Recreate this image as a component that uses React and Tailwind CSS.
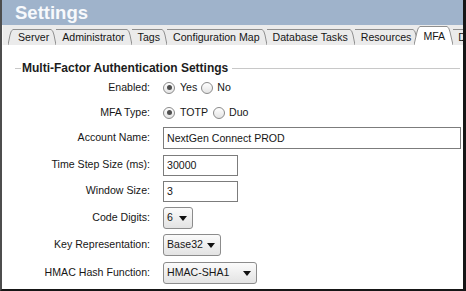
import React from 'react';

const TABS = ['Server', 'Administrator', 'Tags', 'Configuration Map', 'Database Tasks', 'Resources'];

function SlantRight() {
  return (
    <svg width="5" height="16" viewBox="0 0 5 16" className="block shrink-0">
      <path d="M0 0.5 Q2 1 3 6 L5 16" fill="none" stroke="#8f8f8f" strokeWidth="1" />
    </svg>
  );
}

function SlantLeft() {
  return (
    <svg width="5" height="16" viewBox="0 0 5 16" className="block shrink-0">
      <path d="M0 16 L2 6 Q3 1 5 0.5" fill="none" stroke="#8f8f8f" strokeWidth="1" />
    </svg>
  );
}

function Radio({ checked }) {
  return (
    <span className="w-[12px] h-[12px] rounded-full border border-[#8a8a8a] bg-linear-to-b from-white to-[#e4e4e4] flex items-center justify-center shrink-0">
      {checked && <span className="w-[5px] h-[5px] rounded-full bg-[#4f4f4f]" />}
    </span>
  );
}

function Arrow() {
  return (
    <svg width="8" height="5" viewBox="0 0 8 5" className="block shrink-0">
      <path d="M0 0 L8 0 L4 5 Z" fill="#111" />
    </svg>
  );
}

function Select({ value, width }) {
  return (
    <div
      className={`h-[22px] ${width} rounded-[3px] border border-[#8c8c8c] bg-linear-to-b from-[#fbfbfb] to-[#e3e3e3] flex items-center justify-between pl-[3px] pr-[5px] whitespace-nowrap`}
    >
      <span>{value}</span>
      <Arrow />
    </div>
  );
}

function Row({ label, className, children }) {
  return (
    <div className={`flex items-center ${className}`}>
      <div className="w-[148px] text-right">{label}</div>
      <div className="ml-[13px] flex items-center">{children}</div>
    </div>
  );
}

export default function App() {
  return (
    <div className="w-[466px] h-[291px] overflow-hidden bg-white border-l-2 border-r-[3px] border-b-2 border-[#161616] border-l-[#4d4d4d] font-['Liberation_Sans',Arial,sans-serif] text-[10.6px] text-[#161616]">
      {/* Header */}
      <div className="h-[25px] bg-[#9fb3cb] pl-[13px] text-[18.5px] leading-[25px] font-bold text-[#f7f9fc]">
        Settings
      </div>

      {/* Tab strip */}
      <div className="h-[20px] bg-[#ebebeb] border-l border-[#f8f8f8] flex items-end pl-[5px] whitespace-nowrap overflow-hidden">
        <SlantLeft />
        {TABS.map((t) => (
          <div key={t} className="flex items-end shrink-0">
            <div className="h-[16px] border-t border-[#8f8f8f] pl-[5px] pr-[2px] leading-[15px]">{t}</div>
            <SlantRight />
            <div className="w-[1px] h-[16px] border-t border-[#8f8f8f]" />
          </div>
        ))}
        <div className="flex items-end -ml-[5px] shrink-0">
          <svg width="6" height="19" viewBox="0 0 6 19" className="block shrink-0">
            <path d="M0 19 L3 6 Q4 1 6 0.5 L6 19 Z" fill="#fff" />
            <path d="M0 19 L3 6 Q4 1 6 0.5" fill="none" stroke="#8f8f8f" strokeWidth="1" />
          </svg>
          <div className="h-[19px] bg-white border-t border-[#8f8f8f] pl-[3px] pr-[2px] leading-[19px]">MFA</div>
          <svg width="6" height="19" viewBox="0 0 6 19" className="block shrink-0">
            <path d="M0 0.5 Q2 1 3 6 L6 19 L0 19 Z" fill="#fff" />
            <path d="M0 0.5 Q2 1 3 6 L6 19" fill="none" stroke="#8f8f8f" strokeWidth="1" />
          </svg>
        </div>
        <div className="h-[16px] border-t border-[#8f8f8f] pl-[5px] leading-[15px] shrink-0">Data Pruner</div>
      </div>

      {/* Content */}
      <div className="flex flex-col">
        <div className="flex items-center h-[16px] mt-[15px]">
          <div className="ml-[13px] w-[6px] h-px bg-[#c8c8c8]" />
          <div className="ml-[1px] text-[12px] font-bold text-[#1c1c1c]">Multi-Factor Authentication Settings</div>
          <div className="ml-[4px] mr-[3px] flex-1 h-px bg-[#c8c8c8]" />
        </div>

        <Row label="Enabled:" className="h-[20px] mt-[2px]">
          <Radio checked />
          <span className="ml-[5px]">Yes</span>
          <span className="ml-[4px]"><Radio /></span>
          <span className="ml-[4px]">No</span>
        </Row>

        <Row label="MFA Type:" className="h-[20px] mt-[5px]">
          <Radio checked />
          <span className="ml-[5px]">TOTP</span>
          <span className="ml-[5px]"><Radio /></span>
          <span className="ml-[4px]">Duo</span>
        </Row>

        <Row label="Account Name:" className="h-[22px] mt-[4px]">
          <div className="w-[298px] h-[22px] border border-[#7c7c7c] bg-white pl-[3px] leading-[20px]">NextGen Connect PROD</div>
        </Row>

        <Row label="Time Step Size (ms):" className="h-[22px] mt-[5px]">
          <div className="w-[75px] h-[21px] border border-[#7c7c7c] bg-white pl-[3px] leading-[19px]">30000</div>
        </Row>

        <Row label="Window Size:" className="h-[22px] mt-[4px]">
          <div className="w-[75px] h-[21px] border border-[#7c7c7c] bg-white pl-[3px] leading-[19px]">3</div>
        </Row>

        <Row label="Code Digits:" className="h-[22px] mt-[5px]">
          <Select value="6" width="w-[30px]" />
        </Row>

        <Row label="Key Representation:" className="h-[22px] mt-[5px]">
          <Select value="Base32" width="w-[58px]" />
        </Row>

        <Row label="HMAC Hash Function:" className="h-[22px] mt-[6px]">
          <Select value="HMAC-SHA1" width="w-[94px]" />
        </Row>
      </div>
    </div>
  );
}
